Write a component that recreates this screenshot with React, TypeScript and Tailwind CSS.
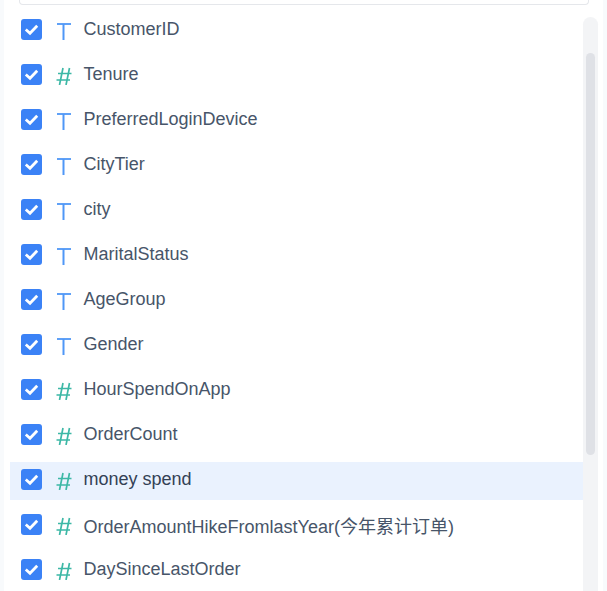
const fields: [string, "t" | "n"][] = [
  ["CustomerID", "t"],
  ["Tenure", "n"],
  ["PreferredLoginDevice", "t"],
  ["CityTier", "t"],
  ["city", "t"],
  ["MaritalStatus", "t"],
  ["AgeGroup", "t"],
  ["Gender", "t"],
  ["HourSpendOnApp", "n"],
  ["OrderCount", "n"],
  ["money spend", "n"],
  ["OrderAmountHikeFromlastYear(今年累计订单)", "n"],
  ["DaySinceLastOrder", "n"],
];

function Check() {
  return (
    <span className="flex h-[21px] w-[21px] shrink-0 items-center justify-center rounded-[3px] bg-[#3b82f6]">
      <svg width="21" height="21" viewBox="0 0 21 21" fill="none">
        <path d="M4.8 10.5 L9 14.2 L16.2 6.8" stroke="#fff" strokeWidth="2.8" />
      </svg>
    </span>
  );
}

function TypeIcon({ kind }: { kind: "t" | "n" }) {
  return kind === "t" ? (
    <svg width="16" height="18" viewBox="0 0 16 18" fill="none" className="mt-[3px] shrink-0">
      <path d="M1 2 H15" stroke="#4f97f7" strokeWidth="1.8" />
      <path d="M7.5 2 V18" stroke="#4f97f7" strokeWidth="2" />
    </svg>
  ) : (
    <svg width="16" height="18" viewBox="0 0 16 18" fill="none" className="mt-[3px] shrink-0">
      <path d="M7 1 L3.5 18 M13.5 1 L10 18 M2 6.5 H15.5 M0.5 13 H14" stroke="#3db8a6" strokeWidth="1.7" />
    </svg>
  );
}

export default function App() {
  return (
    <div className="h-[591px] w-[607px] overflow-hidden bg-[#f8fafc] px-[4px] font-['Liberation_Sans','Noto_Sans_CJK_SC',sans-serif]">
      <div className="h-full bg-white">
        <div className="ml-[15px] h-[5px] w-[570px] rounded-b-[4px] border border-t-0 border-[#e5e7eb]" />
        <div className="flex pl-[6px] pt-[7px]">
          <div className="flex w-[573px] flex-col gap-[7px]">
            {fields.map(([name, kind]) => (
              <div
                key={name}
                className={`flex h-[38px] shrink-0 items-center pb-[3px] pl-[11px] text-[18px] ${
                  name === "money spend" ? "bg-[#eaf2fe] text-[#334155]" : "text-[#475569]"
                }`}
              >
                <Check />
                <span className="ml-[14px] flex w-[27.5px] shrink-0">
                  <TypeIcon kind={kind} />
                </span>
                <span className={`whitespace-nowrap ${name.includes("今年") ? "mt-[6px]" : ""}`}>{name}</span>
              </div>
            ))}
          </div>
          <div className="mt-[5px] flex h-[574px] w-[15px] shrink-0 justify-center rounded-t-[8px] bg-[#f3f4f6] pt-[36px]">
            <div className="h-[402px] w-[9px] rounded-[5px] bg-[#dfe1e6]" />
          </div>
        </div>
      </div>
    </div>
  );
}
